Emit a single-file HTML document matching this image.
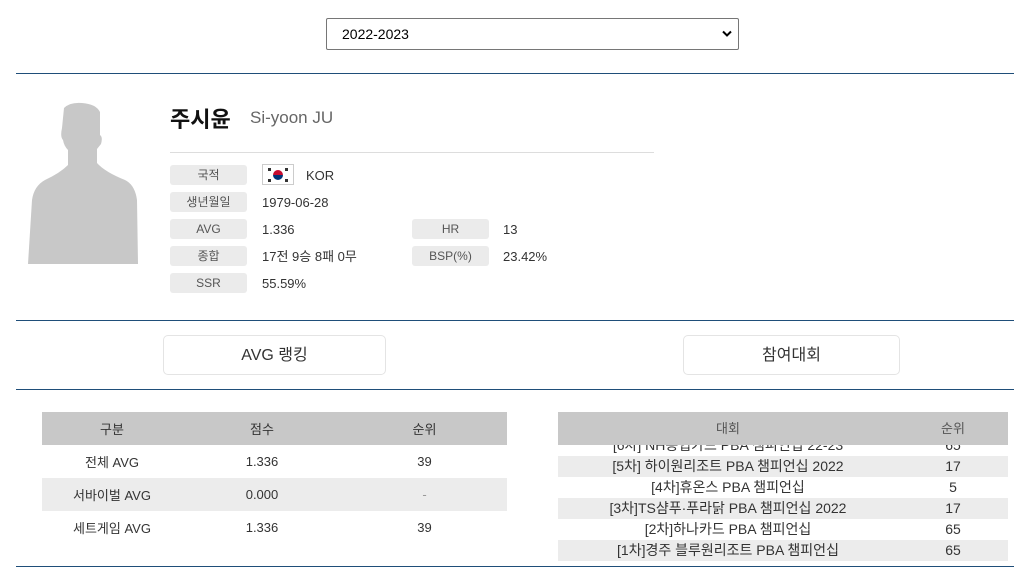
<!DOCTYPE html>
<html><head><meta charset="utf-8"><style>
*{margin:0;padding:0;box-sizing:border-box}
body{width:1014px;height:570px;background:#fff;position:relative;overflow:hidden;font-family:"Liberation Sans","Noto Sans CJK KR",sans-serif;color:#333}
.a{position:absolute}
.line{position:absolute;left:16px;right:0;height:1px;background:#1f4e79}
.lab{position:absolute;width:77px;height:20px;background:#ebebeb;border-radius:3px;font-size:12px;color:#555;text-align:center;line-height:21px}
.val{position:absolute;font-size:13px;color:#333;line-height:21px}
.btn{position:absolute;border:1px solid #e4e4e4;border-radius:5px;background:#fff;text-align:center;font-size:16px;line-height:40px;color:#333}
table{border-collapse:collapse}
.lt td{height:33px;text-align:center;font-size:13px;color:#333}
.hd{background:#c8c8c8;color:#555;font-size:13px;text-align:center}
.rt td{height:21px;text-align:center;font-size:14px;color:#333;line-height:21px}
.g{background:#ececec}
</style></head><body>
<div class="a" style="left:326px;top:18px;width:413px;height:32px;border:1px solid #767676;border-radius:2px;font-size:14px;line-height:30px;padding-left:15px;color:#000">2022-2023
<svg class="a" style="right:6px;top:11px" width="10" height="8" viewBox="0 0 10 8"><path d="M1 1.5 L5 5.5 L9 1.5" stroke="#000" stroke-width="2" fill="none"/></svg></div>
<div class="line" style="top:73px"></div>
<svg class="a" style="left:0;top:0" width="160" height="270"><path d="M64,108 Q70,102 82,103 Q96,104 100,112 L100,135 Q103,137 101,144 L97,149 L97,163 Q105,172 125,180 Q135,185 137,200 L138,264 L28,264 L32,200 Q34,186 45,180 Q60,173 68,165 L68,150 Q64,146 63,140 Q60,137 62,128 Z" fill="#c8c8c8"/></svg>
<div class="a" style="left:170px;top:102px;font-size:22px;color:#111;font-weight:bold">주시윤</div>
<div class="a" style="left:250px;top:108px;font-size:17px;color:#666">Si-yoon JU</div>
<div class="a" style="left:170px;top:152px;width:484px;height:1px;background:#ddd"></div>
<div class="lab" style="left:170px;top:165px">국적</div>
<div class="a" style="left:262px;top:164px;width:32px;height:21px;border:1px solid #ccc;background:#fff"><div class="a" style="left:10px;top:5px;width:10px;height:10px;border-radius:50%;background:linear-gradient(#c60c30 50%,#003478 50%)"></div>
<div class="a" style="left:5px;top:3px;width:3px;height:3px;background:#333"></div><div class="a" style="left:22px;top:3px;width:3px;height:3px;background:#333"></div><div class="a" style="left:5px;top:14px;width:3px;height:3px;background:#333"></div><div class="a" style="left:22px;top:14px;width:3px;height:3px;background:#333"></div></div>
<div class="val" style="left:306px;top:165px">KOR</div>
<div class="lab" style="left:170px;top:192px">생년월일</div><div class="val" style="left:262px;top:192px">1979-06-28</div>
<div class="lab" style="left:170px;top:219px">AVG</div><div class="val" style="left:262px;top:219px">1.336</div>
<div class="lab" style="left:412px;top:219px">HR</div><div class="val" style="left:503px;top:219px">13</div>
<div class="lab" style="left:170px;top:246px">종합</div><div class="val" style="left:262px;top:246px">17전 9승 8패 0무</div>
<div class="lab" style="left:412px;top:246px">BSP(%)</div><div class="val" style="left:503px;top:246px">23.42%</div>
<div class="lab" style="left:170px;top:273px">SSR</div><div class="val" style="left:262px;top:273px">55.59%</div>
<div class="line" style="top:320px"></div>
<div class="btn" style="left:163px;top:335px;width:223px;height:40px">AVG 랭킹</div>
<div class="btn" style="left:683px;top:335px;width:217px;height:40px">참여대회</div>
<div class="line" style="top:389px"></div>
<table class="a lt" style="left:42px;top:412px;width:465px">
<tr class="hd"><td style="width:140px">구분</td><td style="width:160px">점수</td><td>순위</td></tr>
<tr><td>전체 AVG</td><td>1.336</td><td>39</td></tr>
<tr class="g"><td>서바이벌 AVG</td><td>0.000</td><td style="color:#999">-</td></tr>
<tr><td>세트게임 AVG</td><td>1.336</td><td>39</td></tr>
</table>
<div class="a" style="left:558px;top:412px;width:450px;height:150px;overflow:hidden">
<div class="hd" style="position:absolute;left:0;top:0;width:450px;height:33px;line-height:33px;z-index:2"><span class="a" style="left:0;width:340px">대회</span><span class="a" style="left:340px;width:110px">순위</span></div>
<table class="rt a" style="left:0;top:23px;width:450px">
<tr><td style="width:340px">[6차] NH농협카드 PBA 챔피언십 22-23</td><td>65</td></tr>
<tr class="g"><td>[5차] 하이원리조트 PBA 챔피언십 2022</td><td>17</td></tr>
<tr><td>[4차]휴온스 PBA 챔피언십</td><td>5</td></tr>
<tr class="g"><td>[3차]TS샴푸·푸라닭 PBA 챔피언십 2022</td><td>17</td></tr>
<tr><td>[2차]하나카드 PBA 챔피언십</td><td>65</td></tr>
<tr class="g"><td>[1차]경주 블루원리조트 PBA 챔피언십</td><td>65</td></tr>
</table></div>
<div class="line" style="top:566px"></div>
</body></html>
